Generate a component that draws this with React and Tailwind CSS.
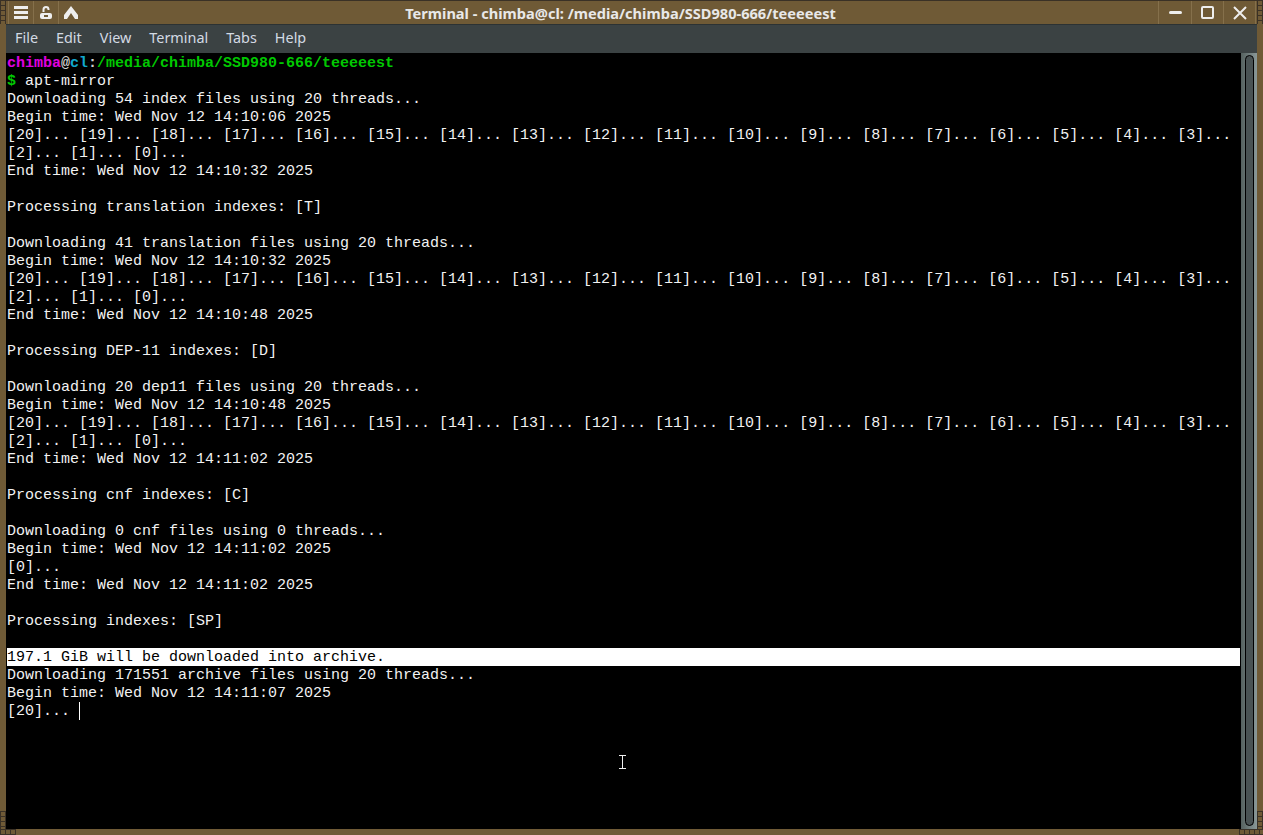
import React from "react";

const progress = "[20]... [19]... [18]... [17]... [16]... [15]... [14]... [13]... [12]... [11]... [10]... [9]... [8]... [7]... [6]... [5]... [4]... [3]...";

const lines = [
  "Downloading 54 index files using 20 threads...",
  "Begin time: Wed Nov 12 14:10:06 2025",
  progress,
  "[2]... [1]... [0]...",
  "End time: Wed Nov 12 14:10:32 2025",
  "",
  "Processing translation indexes: [T]",
  "",
  "Downloading 41 translation files using 20 threads...",
  "Begin time: Wed Nov 12 14:10:32 2025",
  progress,
  "[2]... [1]... [0]...",
  "End time: Wed Nov 12 14:10:48 2025",
  "",
  "Processing DEP-11 indexes: [D]",
  "",
  "Downloading 20 dep11 files using 20 threads...",
  "Begin time: Wed Nov 12 14:10:48 2025",
  progress,
  "[2]... [1]... [0]...",
  "End time: Wed Nov 12 14:11:02 2025",
  "",
  "Processing cnf indexes: [C]",
  "",
  "Downloading 0 cnf files using 0 threads...",
  "Begin time: Wed Nov 12 14:11:02 2025",
  "[0]...",
  "End time: Wed Nov 12 14:11:02 2025",
  "",
  "Processing indexes: [SP]",
  "",
];

const menuItems = ["File", "Edit", "View", "Terminal", "Tabs", "Help"];

const TitleButton = ({ children, className = "" }) => (
  <div className={`h-full flex items-center justify-center border-l border-[#85704b] ${className}`}>
    {children}
  </div>
);

const Line = ({ children, className = "" }) => (
  <div className={`h-[18px] leading-[20px] whitespace-pre ${className}`}>{children}</div>
);

// little grid of the window frame corners
const gripClass =
  "absolute bg-[#6f5a36] bg-[linear-gradient(#3a3126_1px,transparent_1px),linear-gradient(90deg,#3a3126_1px,transparent_1px)] bg-[length:5px_5px]";

export default function App() {
  return (
    <div className="h-[835px] w-full relative flex flex-col overflow-hidden bg-[#6f5a36] font-['Liberation_Sans',sans-serif]">
      {/* Title bar */}
      <div className="h-[24px] shrink-0 flex items-center border-t border-[#3a3126] bg-[#6f5a36]">
        <div className="w-[8px] h-full" />
        <TitleButton className="w-[25px]">
          <svg width="14" height="13" viewBox="0 0 14 13" fill="#eeeeee">
            <rect y="0" width="14" height="3" />
            <rect y="5" width="14" height="3" />
            <rect y="10" width="14" height="3" />
          </svg>
        </TitleButton>
        <TitleButton className="w-[25px]">
          <svg width="14" height="14" viewBox="0 0 14 14" fill="none" stroke="#eeeeee">
            <path d="M4.5 6V3.5a2.5 2.5 0 0 1 5 0V4" strokeWidth="2" />
            <rect x="1" y="7" width="12" height="6" rx="2" fill="#eeeeee" stroke="none" />
            <rect x="5" y="9" width="4" height="2" fill="#6f5a36" stroke="none" />
          </svg>
        </TitleButton>
        <TitleButton className="w-[25px]">
          <svg width="14" height="13" viewBox="0 0 14 13" fill="#eeeeee">
            <path d="M7 0 L14 9 L14 13 L11 13 L7 7 L3 13 L0 13 L0 9 Z" />
          </svg>
        </TitleButton>
        <div className="flex-1 text-center text-[14.6px] font-bold font-['Noto_Sans',sans-serif] text-[#e8e8e8] leading-[24px] whitespace-nowrap">
          Terminal - chimba@cl: /media/chimba/SSD980-666/teeeeest
        </div>
        <TitleButton className="w-[33px]">
          <div className="w-[13px] h-[3px] bg-[#eeeeee] rounded-sm" />
        </TitleButton>
        <TitleButton className="w-[32px]">
          <div className="w-[13px] h-[13px] border-2 border-[#eeeeee] rounded-[2px]" />
        </TitleButton>
        <TitleButton className="w-[32px]">
          <svg width="14" height="14" viewBox="0 0 14 14" stroke="#eeeeee" strokeWidth="2" fill="none">
            <path d="M1 1 L13 13 M13 1 L1 13" />
          </svg>
        </TitleButton>
        <div className="w-[8px] h-full border-l border-[#85704b]" />
      </div>

      {/* Window body */}
      <div className="flex-1 min-h-0 flex flex-col pl-[6px] pr-[6px] pb-[6px] bg-[#6f5a36]">
        <div className="h-[29px] shrink-0 flex items-center bg-[#3b4243] border-t border-[#2c3233] text-[14.4px] font-['Noto_Sans',sans-serif] text-[#d3dae3] pl-[9px] pb-[2px] gap-[18px]">
          {menuItems.map((item) => (
            <span key={item}>{item}</span>
          ))}
        </div>

        <div className="flex-1 min-h-0 flex">
          {/* Terminal */}
          <div className="flex-1 min-w-0 bg-black pl-px pr-px pt-px relative font-['Liberation_Mono',monospace] text-[15px] text-[#f2f2f2] overflow-hidden">
            <Line className="font-bold">
              <span className="text-[#e000e0]">chimba</span>
              <span className="text-[#d0d0d0]">@</span>
              <span className="text-[#11a8cd]">cl</span>
              <span className="text-[#d0d0d0]">:</span>
              <span className="text-[#00c800]">/media/chimba/SSD980-666/teeeeest</span>
            </Line>
            <Line>
              <span className="font-bold text-[#00c800]">$</span> apt-mirror
            </Line>
            {lines.map((text, i) => (
              <Line key={i}>{text}</Line>
            ))}
            <Line className="bg-white text-black">197.1 GiB will be downloaded into archive.</Line>
            <Line>Downloading 171551 archive files using 20 threads...</Line>
            <Line>Begin time: Wed Nov 12 14:11:07 2025</Line>
            <Line className="flex items-start">
              <span>[20]... </span>
              <span className="w-px h-[18px] bg-white" />
            </Line>

            {/* Mouse pointer */}
            <svg className="absolute left-[613px] top-[702px]" width="7" height="14" viewBox="0 0 7 14" stroke="#eeeeee" fill="none">
              <path d="M0 .5 H7 M3.5 .5 V13.5 M0 13.5 H7" />
            </svg>
          </div>

          {/* Scrollbar */}
          <div className="w-[16px] shrink-0 bg-[linear-gradient(90deg,#55615f,#8a9898)] pl-[4px] pr-[3px] pt-[2px] pb-[3px]">
            <div className="h-full bg-[#4a5354] border border-black rounded-full" />
          </div>
        </div>
      </div>

      {/* Frame corners */}
      <div className={`${gripClass} left-0 top-0 w-[6px] h-[24px]`} />
      <div className={`${gripClass} right-0 top-0 w-[6px] h-[24px]`} />
      <div className={`${gripClass} left-0 bottom-0 w-[6px] h-[24px]`} />
      <div className={`${gripClass} left-0 bottom-0 w-[16px] h-[6px]`} />
      <div className={`${gripClass} right-0 bottom-0 w-[6px] h-[24px]`} />
      <div className={`${gripClass} right-0 bottom-0 w-[24px] h-[6px]`} />
    </div>
  );
}
